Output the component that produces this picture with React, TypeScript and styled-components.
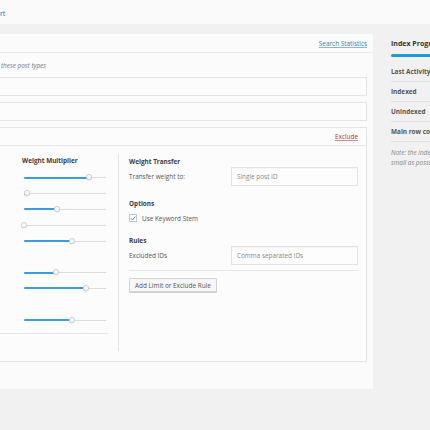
import React from 'react'
import styled, { createGlobalStyle } from 'styled-components'

const GlobalStyle = createGlobalStyle`
  html, body {
    margin: 0;
    padding: 0;
    background: #f1f1f1;
    overflow: hidden;
  }
  body {
    font-family: 'Open Sans', 'Liberation Sans', sans-serif;
    font-size: 6.4px;
    color: #555;
  }
`

const Page = styled.div`
  width: 430px;
  height: 430px;
  overflow: hidden;
`

const TopBar = styled.div`
  height: 24px;
  background: #fafafa;
  display: flex;
  align-items: center;
  padding-top: 2px;
  box-sizing: border-box;
`

const TopLink = styled.a`
  color: #0073aa;
  font-size: 6.8px;
  text-decoration: none;
`

const Content = styled.div`
  display: flex;
  align-items: flex-start;
  gap: 18px;
  padding-top: 10px;
  width: 700px;
`

const Panel = styled.section`
  width: 373px;
  flex: none;
  background: #fbfbfb;
  padding-bottom: 27px;
`

const PanelHeader = styled.div`
  height: 18px;
  border-bottom: 1px solid #ececec;
  display: flex;
  align-items: center;
  justify-content: flex-end;
  padding-right: 6px;
`

const Link = styled.a<{ $danger?: boolean }>`
  color: ${p => (p.$danger ? '#b32d2e' : '#2e7db8')};
  text-decoration: underline;
  text-decoration-color: ${p => (p.$danger ? '#d58a8a' : '#8ab6d8')};
  font-size: 6.4px;
`

const PanelBody = styled.div`
  padding: 8px 6px 0 0;
`

const Hint = styled.p`
  margin: 0 0 6px 1px;
  line-height: 10px;
  font-style: italic;
  color: #777;
`

const Box = styled.div<{ $height?: number }>`
  background: #fcfcfc;
  border: 1px solid #e4e4e4;
  border-left: none;
  height: ${p => (p.$height ? `${p.$height}px` : 'auto')};
  box-sizing: border-box;
  & + & {
    margin-top: 6px;
  }
`

const BoxHeader = styled.div`
  height: 17px;
  border-bottom: 1px solid #e8e8e8;
  display: flex;
  align-items: center;
  justify-content: flex-end;
  padding-right: 8px;
`

const Columns = styled.div`
  display: flex;
  padding: 8px 8px 10px 0;
`

const WeightColumn = styled.div`
  width: 119px;
  box-sizing: border-box;
  border-right: 1px solid #e4e4e4;
  padding: 2px 10px 17px 0;
`

const SideHeading = styled.h4<{ $gap?: number }>`
  margin: ${p => p.$gap ?? 0}px 0 0;
  line-height: 10px;
  font-size: 6.4px;
  font-weight: 700;
  color: #3c3c3c;
`

const WeightHeading = styled(SideHeading)`
  padding-left: 22px;
  margin-bottom: 4px;
`

const SliderRow = styled.div`
  height: 15.8px;
  display: flex;
  align-items: center;
  padding-left: 24px;
  padding-right: 2px;
`

const Track = styled.div`
  position: relative;
  flex: 1;
  height: 1px;
  background: #dcdcdc;
`

const Fill = styled.div`
  position: absolute;
  left: 0;
  top: -0.5px;
  height: 2px;
  background: #3b9ddd;
  border-radius: 1px;
`

const Knob = styled.span`
  position: absolute;
  top: -3px;
  width: 6px;
  height: 6px;
  margin-left: -3px;
  border-radius: 50%;
  background: #fff;
  border: 1px solid #cfcfcf;
  box-sizing: border-box;
  box-shadow: 0 0.5px 1px rgba(0, 0, 0, 0.15);
`

const Divider = styled.hr<{ $gap: number }>`
  margin: ${p => p.$gap}px 0 0;
  border: none;
  border-top: 1px solid #e6e6e6;
`

const SettingsColumn = styled.div`
  flex: 1;
  padding: 3px 0 0 10px;
`

const FieldRow = styled.div<{ $gap?: number }>`
  display: flex;
  align-items: center;
  margin-top: ${p => p.$gap ?? 0}px;
`

const FieldLabel = styled.span`
  width: 102px;
  color: #555;
`

const TextInput = styled.input`
  flex: 1;
  height: 19px;
  box-sizing: border-box;
  border: 1px solid #e2e2e2;
  background: #fdfdfd;
  padding: 0 5px;
  font-family: inherit;
  font-size: 6.4px;
  color: #555;
  box-shadow: inset 0 1px 1px rgba(0, 0, 0, 0.03);
  &::placeholder {
    color: #888;
  }
`

const CheckRow = styled.label`
  display: flex;
  align-items: center;
  gap: 5px;
  height: 10px;
  margin-top: 4px;
  color: #555;
`

const CheckBox = styled.span`
  width: 8px;
  height: 8px;
  box-sizing: border-box;
  border: 1px solid #c8c8c8;
  background: #fff;
  display: flex;
  align-items: center;
  justify-content: center;
  & > svg {
    width: 7px;
    height: 7px;
  }
`

const Button = styled.button`
  margin-top: 7px;
  height: 14px;
  padding: 0 5px;
  border: 1px solid #d4d4d4;
  border-radius: 1px;
  background: #f7f7f7;
  box-shadow: 0 1px 0 #d0d0d0;
  font-family: inherit;
  font-size: 6.4px;
  color: #555;
`

const Sidebar = styled.aside`
  width: 200px;
  flex: none;
`

const SidebarTitle = styled.h3`
  margin: 0;
  height: 20px;
  line-height: 20px;
  font-size: 7px;
  font-weight: 700;
  color: #333;
`

const Progress = styled.div`
  height: 3px;
  border-radius: 2px;
  background: #1e9bd7;
  margin-bottom: 5px;
`

const StatRow = styled.div`
  height: 19px;
  border-bottom: 1px solid #e2e2e2;
  display: flex;
  align-items: center;
  font-weight: 700;
  color: #555;
  white-space: nowrap;
`

const Note = styled.p`
  margin: 6px 0 0;
  line-height: 10px;
  font-style: italic;
  color: #888;
  white-space: nowrap;
`

const weights: (number | null)[] = [0.795, 0.036, 0.4, 0, 0.59, null, 0.385, 0.76, null, 0.58]

const stats = ['Last Activity', 'Indexed', 'Unindexed', 'Main row count']

function Check () {
  return (
    <svg viewBox='0 0 10 10'>
      <path d='M2 5.2 L4.2 7.4 L8.2 2.4' fill='none' stroke='#1e8cbe' strokeWidth='1.6' strokeLinecap='round' strokeLinejoin='round' />
    </svg>
  )
}

export default function App () {
  return (
    <Page>
      <GlobalStyle />
      <TopBar>
        <TopLink>rt</TopLink>
      </TopBar>
      <Content>
        <Panel>
          <PanelHeader>
            <Link>Search Statistics</Link>
          </PanelHeader>
          <PanelBody>
            <Hint>these post types</Hint>
            <Box $height={19} />
            <Box $height={19} />
            <Box>
              <BoxHeader>
                <Link $danger>Exclude</Link>
              </BoxHeader>
              <Columns>
                <WeightColumn>
                  <WeightHeading>Weight Multiplier</WeightHeading>
                  {weights.map((w, i) => (
                    <SliderRow key={i}>
                      {w !== null && (
                        <Track>
                          <Fill style={{ width: `${w * 100}%` }} />
                          <Knob style={{ left: `${w * 100}%` }} />
                        </Track>
                      )}
                    </SliderRow>
                  ))}
                  <Divider $gap={5} />
                </WeightColumn>
                <SettingsColumn>
                  <SideHeading>Weight Transfer</SideHeading>
                  <FieldRow>
                    <FieldLabel>Transfer weight to:</FieldLabel>
                    <TextInput placeholder='Single post ID' />
                  </FieldRow>
                  <SideHeading $gap={13}>Options</SideHeading>
                  <CheckRow>
                    <CheckBox><Check /></CheckBox>
                    Use Keyword Stem
                  </CheckRow>
                  <SideHeading $gap={13}>Rules</SideHeading>
                  <FieldRow>
                    <FieldLabel>Excluded IDs</FieldLabel>
                    <TextInput placeholder='Comma separated IDs' />
                  </FieldRow>
                  <Divider $gap={5} />
                  <Button>Add Limit or Exclude Rule</Button>
                </SettingsColumn>
              </Columns>
            </Box>
          </PanelBody>
        </Panel>
        <Sidebar>
          <SidebarTitle>Index Progress</SidebarTitle>
          <Progress />
          {stats.map(s => (
            <StatRow key={s}>{s}</StatRow>
          ))}
          <Note>
            Note: the indexer works in the background to keep the index as
            <br />
            small as possible and up to date.
          </Note>
        </Sidebar>
      </Content>
    </Page>
  )
}
